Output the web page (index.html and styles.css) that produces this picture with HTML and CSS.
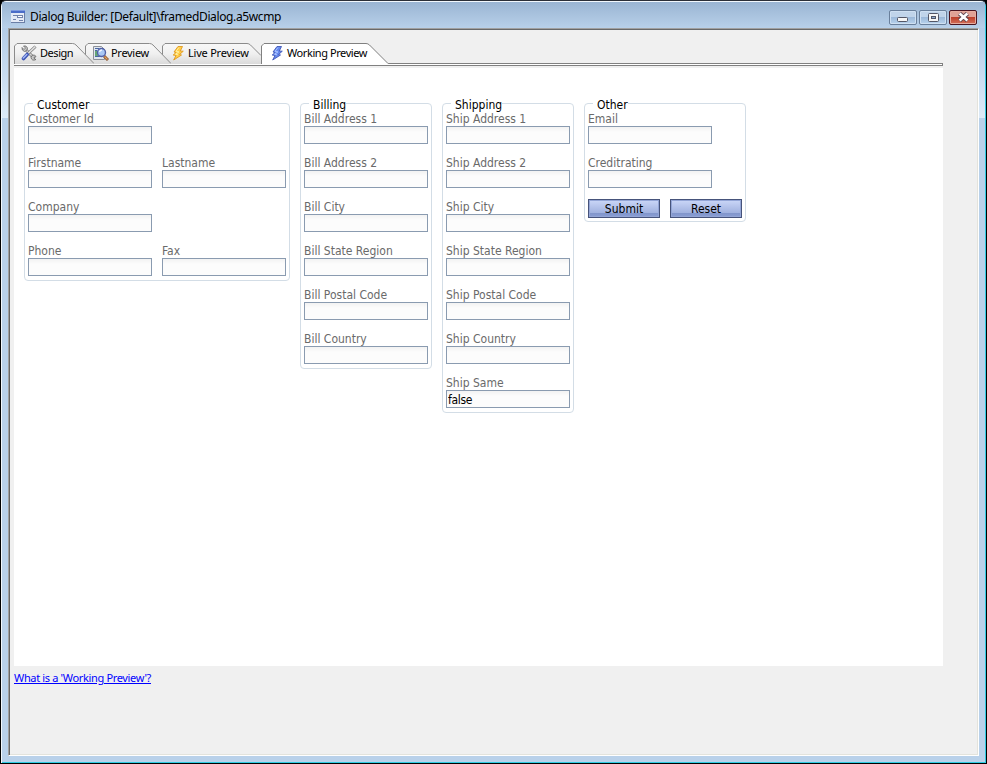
FILE: index.html
```html
<!DOCTYPE html>
<html lang="en">
<head>
<meta charset="utf-8">
<title>Dialog Builder</title>
<link rel="stylesheet" href="styles.css">
</head>
<body>
<div class="window">
  <header class="titlebar">
    <svg class="app-icon" width="14" height="13" viewBox="0 0 14 13">
      <rect width="14" height="13" fill="#e4eaf6"/>
      <rect width="14" height="3" fill="#4a6cc8"/>
      <path d="M0 .5h14" stroke="#7d9ae0"/>
      <path d="M0 12.500h14M13.500 3v10" stroke="#6b7fa6"/>
      <path d="M2 5.500h4M2 9.500h3M8 10.500h4" stroke="#7082ac"/>
      <rect x="6.500" y="5.500" width="5" height="2" fill="#fff" stroke="#7082ac"/>
    </svg>
    <h1 class="title">Dialog Builder: [Default]\framedDialog.a5wcmp</h1>
    <div class="controls">
      <button class="control" aria-label="Minimize">
        <svg width="12" height="6" viewBox="0 0 12 6"><rect x=".5" y=".5" width="10" height="4" rx="1" fill="#f6f6f6" stroke="#535666"/></svg>
      </button>
      <button class="control" aria-label="Maximize">
        <svg width="11" height="9" viewBox="0 0 11 9"><rect x=".5" y=".5" width="10" height="8" rx="1" fill="#f6f6f6" stroke="#535666"/><rect x="3.500" y="3.500" width="4" height="2" fill="#8eabd0" stroke="#535666"/></svg>
      </button>
      <button class="control close" aria-label="Close">
        <svg width="13" height="10" viewBox="0 0 13 10"><path d="M2.500 1.500l8 7M10.500 1.500l-8 7" stroke="#5a4650" stroke-width="4.400"/><path d="M2.600 1.600l7.800 6.800M10.400 1.600l-7.800 6.800" stroke="#fff" stroke-width="2.600"/></svg>
      </button>
    </div>
  </header>
  <main class="client">
    <nav class="tabs">
      <a class="tab design">
        <svg class="shape" width="80" height="21" viewBox="0 0 80 21"><path d="M.5 21V3L3 .5h55.500q2 0 3.500 1.500L80 20.500V21z" fill="url(#tabfill)"/><path d="M.5 21V3L3 .5h55.500q2 0 3.500 1.500L80 20.500" fill="none" stroke="#8b8b8b"/></svg>
        <svg class="icon" width="16" height="16" viewBox="0 0 16 16">
          <path d="M4 4l9.500 9.500" stroke="#777" stroke-width="3"/>
          <path d="M4 4l9.500 9.500" stroke="#d4d4d4" stroke-width="1.600"/>
          <path d="M1 2.500L3 4.500 4.500 3 2.500 1Q5.500.2 6.500 3q0 3-3 3.500Q.5 5.500 1 2.500z" fill="#c8c8c8" stroke="#666" stroke-width=".8"/>
          <path d="M10 12.500q.5-3 3.500-2.500l1.500 1.500-2 .8.500 1.700 1.500.5q-4 2-5-2z" fill="#c8c8c8" stroke="#666" stroke-width=".8"/>
          <path d="M14.500 1.500L7 8.500" stroke="#777" stroke-width="3"/>
          <path d="M14.300 1.700L7 8.500" stroke="#e2e2e2" stroke-width="1.600"/>
          <path d="M6.200 9.500L2.500 13.500" stroke="#3d55b5" stroke-width="3.600" stroke-linecap="round"/>
          <path d="M5.800 9.500L2.300 13" stroke="#a4b8f4" stroke-width="1.500" stroke-linecap="round"/>
        </svg>
        <span>Design</span>
      </a>
      <a class="tab preview">
        <svg class="shape" width="86" height="21" viewBox="0 0 86 21"><path d="M.5 21V3L3 .5h61.500q2 0 3.500 1.500L86 20.500V21z" fill="url(#tabfill)"/><path d="M.5 12V3L3 .5h61.500q2 0 3.500 1.500L86 20.500" fill="none" stroke="#8b8b8b"/></svg>
        <svg class="icon" width="16" height="16" viewBox="0 0 16 16">
          <path d="M.5 1.500h8l3 3v10H.5z" fill="#dfe6ef" stroke="#8c9098"/>
          <path d="M2 3.500h4M2 5.500h2M2 11.500h6" stroke="#4967a3"/>
          <path d="M2 6h3v5H2z" fill="#65a775"/>
          <path d="M11 11l4 4" stroke="#85532f" stroke-width="3"/>
          <path d="M11.500 11.500l3 3" stroke="#e3a15f" stroke-width="1.200"/>
          <circle cx="8.500" cy="7.500" r="4" fill="#a9c8f5" stroke="#5260a6" stroke-width="1.400"/>
          <path d="M6.500 7q.5-2 2.500-2" fill="none" stroke="#f2f8ff" stroke-width="1.400"/>
        </svg>
        <span>Preview</span>
      </a>
      <a class="tab live">
        <svg class="shape" width="100" height="21" viewBox="0 0 100 21"><path d="M.5 21V3L3 .5h82q2 0 3.500 1.500L99 12.500V21z" fill="url(#tabfill)"/><path d="M.5 12V3L3 .5h82q2 0 3.500 1.500L99 12.500" fill="none" stroke="#8b8b8b"/></svg>
        <svg class="icon" width="12" height="16" viewBox="0 0 12 16"><path d="M6 1.500h4.500L8.300 6l3 .2L7.500 9.500l2 .5-7.800 5L4 10.500l-2.800-.5 2.800-2.500L2 7z" fill="#ffcd48" stroke="#e09a20" stroke-width=".9"/><path d="M7 2.500L4 6.300l3 .6-3.500 2.300 2.500.6" fill="none" stroke="#fff0a0"/></svg>
        <span>Live Preview</span>
      </a>
      <a class="tab working">
        <svg class="shape" width="128" height="23" viewBox="0 0 128 23"><path d="M.5 22V3L3 .5h102q2 0 3.500 1.500L127 20.500V22z" fill="#fff"/><path d="M.5 21V3L3 .5h102q2 0 3.500 1.500L127 20.500" fill="none" stroke="#808080"/></svg>
        <svg class="icon" width="12" height="16" viewBox="0 0 12 16"><path d="M6 1.500h4.500L8.300 6l3 .2L7.500 9.500l2 .5-7.800 5L4 10.500l-2.800-.5 2.800-2.500L2 7z" fill="#6488ee" stroke="#4258b8" stroke-width=".9"/><path d="M7 2.500L4 6.300l3 .6-3.500 2.300 2.500.6" fill="none" stroke="#a9c2ff"/></svg>
        <span>Working Preview</span>
      </a>
    </nav>
    <div class="tab-rule"></div>
    <section class="page">
      <div class="group customer">
        <h2 class="legend">Customer</h2>
        <label class="field">Customer Id<input></label><i></i>
        <label class="field">Firstname<input></label>
        <label class="field">Lastname<input></label>
        <label class="field">Company<input></label><i></i>
        <label class="field">Phone<input></label>
        <label class="field">Fax<input></label>
      </div>
      <div class="group">
        <h2 class="legend">Billing</h2>
        <label class="field">Bill Address 1<input></label>
        <label class="field">Bill Address 2<input></label>
        <label class="field">Bill City<input></label>
        <label class="field">Bill State Region<input></label>
        <label class="field">Bill Postal Code<input></label>
        <label class="field">Bill Country<input></label>
      </div>
      <div class="group">
        <h2 class="legend">Shipping</h2>
        <label class="field">Ship Address 1<input></label>
        <label class="field">Ship Address 2<input></label>
        <label class="field">Ship City<input></label>
        <label class="field">Ship State Region<input></label>
        <label class="field">Ship Postal Code<input></label>
        <label class="field">Ship Country<input></label>
        <label class="field">Ship Same<input value="false"></label>
      </div>
      <div class="group other">
        <h2 class="legend">Other</h2>
        <label class="field">Email<input></label>
        <label class="field">Creditrating<input></label>
        <div class="actions">
          <button class="action">Submit</button>
          <button class="action">Reset</button>
        </div>
      </div>
    </section>
    <a class="help" href="#">What is a 'Working Preview'?</a>
  </main>
</div>
<svg class="defs" width="0" height="0"><defs><linearGradient id="tabfill" x1="0" y1="0" x2="0" y2="1"><stop offset="0" stop-color="#f8f8f8"/><stop offset=".5" stop-color="#f0f0f0"/><stop offset="1" stop-color="#dadada"/></linearGradient></defs></svg>
</body>
</html>
```
FILE: styles.css
```css
* { box-sizing: border-box; }

body {
  margin: 0;
  height: 764px;
  overflow: hidden;
  background: #000;
  font-family: "DejaVu Sans Condensed", "DejaVu Sans", sans-serif;
  font-size: 12px;
  color: #000;
}

.window {
  display: flex;
  flex-direction: column;
  width: 987px;
  height: 764px;
  padding: 0 7px 7px 6px;
  border: 1px solid #000;
  border-top-color: #2b2f38;
  border-radius: 6px 6px 0 0;
  background: linear-gradient(#99b4d1 0, #b4cde8 28px, #dceaf7 117px, #b9d1ea 117px);
  box-shadow: inset 1px 1px #f2f8fd, inset -1px -1px #2fcbe2;
}

.titlebar {
  display: flex;
  align-items: center;
  flex: none;
  height: 27px;
  margin: 0 -7px 0 -6px;
  padding: 5px 9px 0 10px;
  background: linear-gradient(#9ab5d3, #b9d1ea) 1px 1px / calc(100% - 2px) 100% no-repeat;
  border-radius: 5px 5px 0 0;
}

.app-icon { flex: none; margin-top: -2px; }

.title {
  margin: 0 auto 0 5px;
  font: 400 12px/18px "Noto Sans", sans-serif;
  letter-spacing: -0.37px;
  white-space: nowrap;
}

.controls { display: flex; gap: 2px; }

.control {
  display: flex;
  align-items: center;
  justify-content: center;
  width: 28px;
  height: 15px;
  padding: 0;
  border: 1px solid #697f9b;
  border-radius: 2px;
  background: linear-gradient(#c0d4ea 0 45%, #9ab7d8 46%, #b9d3ed);
  box-shadow: inset 0 0 0 1px #cfe0f2;
}

.control:first-child svg { margin-top: 5px; }

.close {
  border-color: #4a1420;
  background: linear-gradient(#e0a296 0 45%, #bb3d28 46%, #d3705b);
  box-shadow: inset 0 0 0 1px #e5ac9f;
}

.client {
  flex: 1;
  min-height: 0;
  margin-left: 1px;
  padding: 13px 0 0 5px;
  border: 1px solid;
  border-color: #a0a0a0 #fff #fff #a0a0a0;
  background: #f0f0f0;
  box-shadow: inset 1px 1px #696969, inset -1px -1px #e3e3dc;
}

.tabs {
  display: flex;
  height: 21px;
  margin-top: 1px;
  font: 11px/20px "Noto Sans", sans-serif;
  white-space: nowrap;
}

.tab {
  position: relative;
  display: flex;
  align-items: flex-start;
  height: 21px;
}

.tab span { position: relative; }
.tab .icon { position: relative; flex: none; margin-top: 2px; }
.shape { position: absolute; left: 0; top: 0; }

.design { z-index: 3; width: 71px; padding-left: 7px; }
.design span { margin-left: 3px; letter-spacing: -0.45px; }
.preview { z-index: 2; width: 77px; padding-left: 8px; }
.preview span { margin-left: 2px; letter-spacing: -0.3px; }
.live { z-index: 1; width: 99px; padding-left: 10px; }
.live span { margin-left: 4px; letter-spacing: -0.22px; }
.working { z-index: 4; width: 128px; padding-left: 10px; }
.working span { margin-left: 4px; letter-spacing: -0.42px; }

.tab-rule {
  width: 929px;
  height: 3px;
  margin-top: -1px;
  border: 1px solid #808080;
  border-left: 0;
  background: #fff;
}

.page {
  display: flex;
  align-items: flex-start;
  gap: 10px;
  width: 929px;
  height: 598px;
  margin-top: 2px;
  padding: 35px 10px 0;
  background: #fff;
}

.group {
  position: relative;
  display: grid;
  grid-template-columns: 124px;
  gap: 12px 10px;
  padding: 8px 3px 4px;
  border: 1px solid #d3dde6;
  border-radius: 4px;
}

.customer { grid-template-columns: 124px 124px; }
.other { width: 162px; padding-bottom: 3px; }

.legend {
  position: absolute;
  left: 8px;
  top: -6px;
  margin: 0;
  padding-left: 4px;
  background: #fff;
  font-size: 12px;
  font-weight: 400;
  line-height: 14px;
  height: 14px;
}

.field {
  display: block;
  line-height: 14px;
  color: #6a6a6a;
  white-space: nowrap;
}

.field input {
  display: block;
  width: 124px;
  height: 18px;
  padding: 1px 1px 0;
  border: 1px solid #8a9bb0;
  background: linear-gradient(#f2f2f2, #fcfcfc 5px);
  font: 12px "DejaVu Sans Condensed", "DejaVu Sans", sans-serif;
  letter-spacing: -0.3px;
  color: #000;
  outline: 0;
}

.actions { display: flex; gap: 10px; margin-top: -1px; }

.action {
  flex: none;
  width: 72px;
  height: 19px;
  padding: 1px 0 0;
  border: 1px solid #46537b;
  background: linear-gradient(#cbd7f8, #9fb0de 78%, #8296cc 79%, #8a9ed4);
  box-shadow: inset 0 0 0 1px #93a5d6;
  font: 12px/15px "DejaVu Sans Condensed", "DejaVu Sans", sans-serif;
  color: #000;
}

.help {
  display: inline-block;
  margin: 4px 0 0;
  font: 11px/16px "Noto Sans", sans-serif;
  letter-spacing: -0.35px;
  color: #00f;
}

.defs { position: absolute; }
```
